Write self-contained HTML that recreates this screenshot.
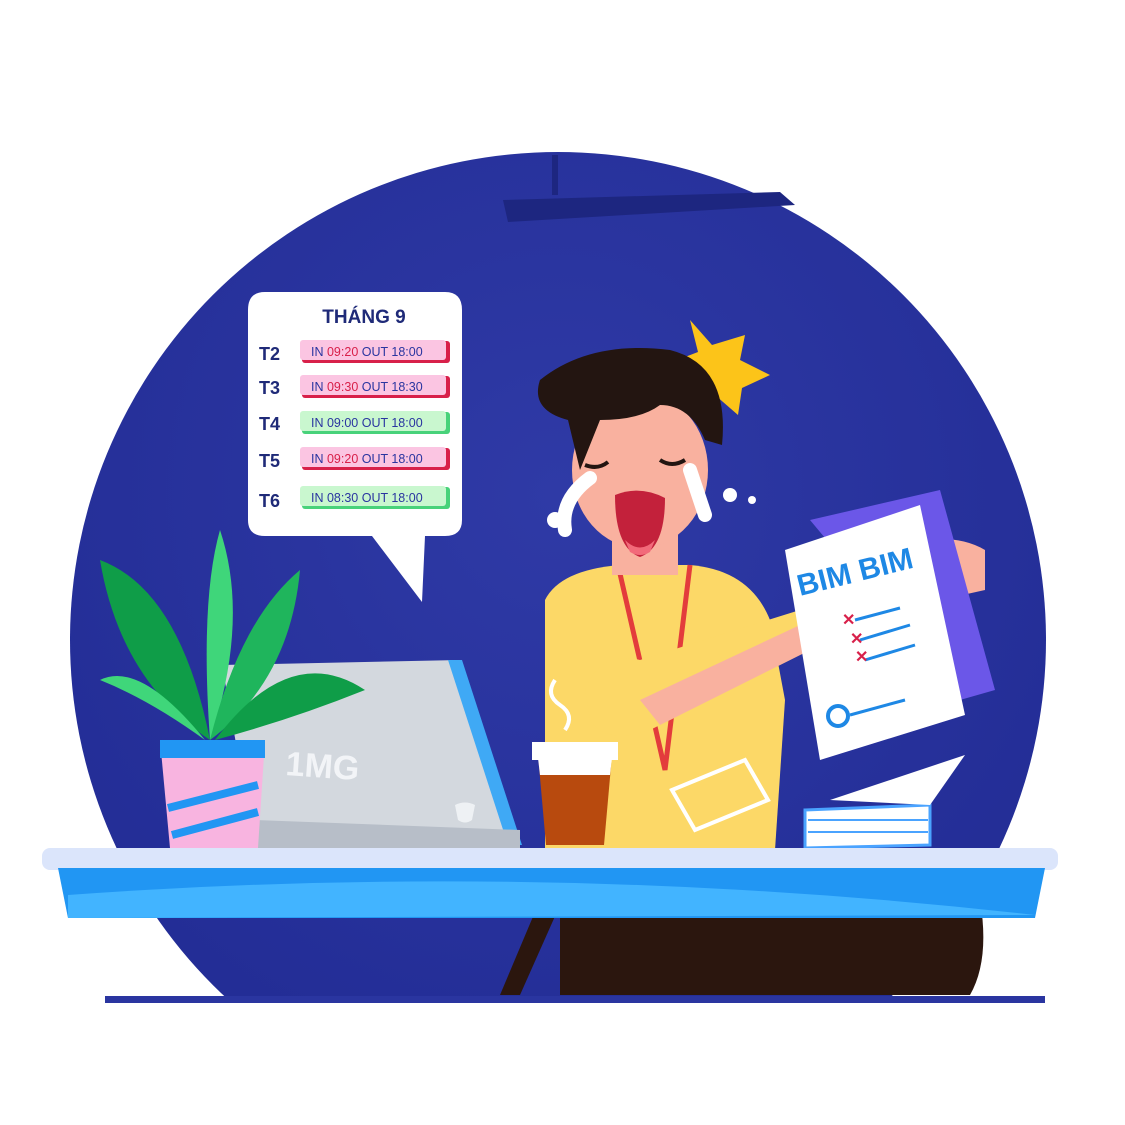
<!DOCTYPE html>
<html><head><meta charset="utf-8"><style>
html,body{margin:0;padding:0;background:#fff;width:1125px;height:1125px;overflow:hidden}
svg{display:block}
text{font-family:"Liberation Sans",sans-serif}
</style></head><body>
<svg width="1125" height="1125" viewBox="0 0 1125 1125" xmlns="http://www.w3.org/2000/svg">
<defs>
<clipPath id="c"><rect x="0" y="0" width="1125" height="1000"/></clipPath>
<radialGradient id="bg" cx="0.5" cy="0.35" r="0.6"><stop offset="0" stop-color="#2f3aa6"/><stop offset="1" stop-color="#232d96"/></radialGradient>
</defs>
<g clip-path="url(#c)"><circle cx="558" cy="640" r="488" fill="url(#bg)"/></g>
<rect x="105" y="996" width="940" height="7" fill="#2a35a0"/>
<!-- ceiling light -->
<path d="M503 200 L780 192 L795 205 L508 222 Z" fill="#1d2680"/>
<path d="M552 155 L558 155 L558 195 L552 195 Z" fill="#1d2680"/>
<!-- speech bubble -->
<path d="M265 292 H445 Q462 292 462 310 V520 Q462 536 445 536 H425 L422 602 L372 536 H265 Q248 536 248 520 V310 Q248 292 265 292 Z" fill="#fff"/>
<text x="364" y="323" text-anchor="middle" font-size="19" font-weight="bold" fill="#1f2a78">THÁNG 9</text>
<g font-size="18" font-weight="bold" fill="#1f2a78">
<text x="259" y="360">T2</text><text x="259" y="394">T3</text><text x="259" y="430">T4</text><text x="259" y="467">T5</text><text x="259" y="507">T6</text></g>
<g font-size="12.5" fill="#2a35a0">
<rect x="302" y="341" width="148" height="22" rx="3" fill="#d8204a"/><rect x="300" y="340" width="146" height="20" rx="3" fill="#fbc5e2"/>
<text x="311" y="356">IN <tspan fill="#d8204a">09:20</tspan> OUT 18:00</text>
<rect x="302" y="376" width="148" height="22" rx="3" fill="#d8204a"/><rect x="300" y="375" width="146" height="20" rx="3" fill="#fbc5e2"/>
<text x="311" y="391">IN <tspan fill="#d8204a">09:30</tspan> OUT 18:30</text>
<rect x="302" y="412" width="148" height="22" rx="3" fill="#48d27a"/><rect x="300" y="411" width="146" height="20" rx="3" fill="#c9f7cf"/>
<text x="311" y="427">IN 09:00 OUT 18:00</text>
<rect x="302" y="448" width="148" height="22" rx="3" fill="#d8204a"/><rect x="300" y="447" width="146" height="20" rx="3" fill="#fbc5e2"/>
<text x="311" y="463">IN <tspan fill="#d8204a">09:20</tspan> OUT 18:00</text>
<rect x="302" y="487" width="148" height="22" rx="3" fill="#48d27a"/><rect x="300" y="486" width="146" height="20" rx="3" fill="#c9f7cf"/>
<text x="311" y="502">IN 08:30 OUT 18:00</text></g>
<!-- star -->
<path d="M690 320 L712 345 L745 335 L740 360 L770 375 L742 388 L738 415 L715 395 L690 408 L695 380 L672 362 L698 352 Z" fill="#fcc419"/>
<!-- person legs -->
<path d="M560 900 L980 900 Q990 960 970 995 L560 995 Z" fill="#2b160e"/>
<path d="M540 900 L500 995 L520 995 L560 905 Z" fill="#2b160e"/>
<!-- body -->
<path d="M545 600 Q560 570 620 565 L690 565 Q750 570 770 620 L785 700 L775 850 L545 850 Z" fill="#fcd867"/>
<path d="M618 565 L665 770 L690 565" fill="none" stroke="#e33c3c" stroke-width="5"/>
<!-- neck/head -->
<rect x="612" y="525" width="66" height="50" fill="#f9b19f"/>
<ellipse cx="640" cy="470" rx="68" ry="78" fill="#f9b19f"/>
<path d="M540 380 Q590 340 670 350 Q730 365 722 445 L705 440 Q690 405 660 405 Q640 420 600 420 L580 470 L568 420 Q530 410 540 380 Z" fill="#231511"/>
<path d="M585 465 Q598 470 608 462 M660 460 Q672 468 685 460" stroke="#231511" stroke-width="4" fill="none"/>
<path d="M615 495 Q640 485 665 498 Q665 548 640 557 Q615 548 615 495 Z" fill="#c3213b"/>
<path d="M625 540 Q640 555 655 540 L650 552 Q640 558 630 552 Z" fill="#f26a7a"/>
<path d="M590 478 Q560 500 565 530 M690 470 Q700 500 705 515" stroke="#fff" stroke-width="14" fill="none" stroke-linecap="round"/>
<circle cx="730" cy="495" r="7" fill="#fff"/><circle cx="752" cy="500" r="4" fill="#fff"/><circle cx="555" cy="520" r="8" fill="#fff"/>
<!-- arm across body -->
<path d="M585 690 Q600 650 640 660 L800 610 L820 645 L650 730 Q605 745 590 720 Z" fill="#fcd867"/>
<path d="M640 700 L800 625 L820 645 L660 725 Z" fill="#f9b19f"/>
<path d="M795 605 Q815 595 832 615 L830 640 L805 648 Z" fill="#f9b19f"/>
<path d="M920 540 Q960 535 985 550 L985 590 L940 600 Z" fill="#f9b19f"/>
<!-- paper -->
<path d="M810 520 L940 490 L995 690 L960 700 Z" fill="#6b57e8"/>
<path d="M785 550 L920 505 L965 715 L820 760 Z" fill="#fff"/>
<text x="800" y="596" font-size="30" font-weight="bold" fill="#1e88e5" transform="rotate(-14 800 596)">BIM BIM</text>
<path d="M855 620 L900 608 M860 640 L910 625 M865 660 L915 645 M850 715 L905 700" stroke="#1e88e5" stroke-width="3"/>
<text x="842" y="625" font-size="16" fill="#d8204a" font-weight="bold">✕</text>
<text x="850" y="644" font-size="16" fill="#d8204a" font-weight="bold">✕</text>
<text x="855" y="662" font-size="16" fill="#d8204a" font-weight="bold">✕</text>
<circle cx="838" cy="716" r="10" fill="none" stroke="#1e88e5" stroke-width="4"/>
<!-- papers stack -->
<path d="M805 810 L930 805 L930 845 L805 848 Z" fill="#fff" stroke="#4aa3ff" stroke-width="3"/>
<path d="M808 820 H928 M808 832 H928" stroke="#4aa3ff" stroke-width="2"/>
<path d="M830 800 L965 755 L930 805 Z" fill="#fff"/>
<!-- id card -->
<path d="M672 790 L745 760 L768 800 L695 830 Z" fill="#fcd867" stroke="#fff" stroke-width="4"/>
<!-- laptop -->
<path d="M222 665 L460 660 L520 845 L255 850 Z" fill="#d3d8de"/>
<path d="M448 660 L462 660 L522 845 L508 845 Z" fill="#3fa9f5"/>
<text x="285" y="775" font-size="34" font-weight="bold" fill="#f2f4f7" transform="rotate(4 285 775)">1MG</text>
<path d="M455 805 Q465 800 475 805 L472 820 Q465 825 458 820 Z" fill="#eef1f4"/>
<path d="M255 820 L520 830 L520 850 L255 850 Z" fill="#b7bec8"/>
<!-- plant -->
<g fill="#1fb55c">
<path d="M210 740 Q120 680 100 560 Q180 590 210 740 Z" fill="#0f9d48"/>
<path d="M210 740 Q200 600 220 530 Q250 620 210 740 Z" fill="#3fd67a"/>
<path d="M210 740 Q240 620 300 570 Q290 680 210 740 Z"/>
<path d="M215 740 Q290 640 365 690 Q290 720 215 740 Z" fill="#0f9d48"/>
<path d="M205 740 Q150 700 100 680 Q140 660 205 740 Z" fill="#3fd67a"/>
</g>
<path d="M160 740 L265 740 L258 848 L170 848 Z" fill="#f8b4e0"/>
<rect x="160" y="740" width="105" height="18" fill="#2196f3"/>
<path d="M168 808 L258 785 M172 835 L258 812" stroke="#2196f3" stroke-width="8"/>
<!-- coffee -->
<path d="M555 680 Q545 695 560 705 Q575 715 565 730" stroke="#fff" stroke-width="4" fill="none"/>
<path d="M538 755 L612 755 L604 845 L546 845 Z" fill="#b84a0e"/>
<path d="M538 758 L612 758 L610 775 L540 775 Z" fill="#fff"/>
<path d="M532 742 L618 742 L618 760 L532 760 Z" fill="#fff"/>
<!-- desk -->
<rect x="42" y="848" width="1016" height="22" rx="8" fill="#dbe5fb"/>
<path d="M58 868 L1045 868 L1035 918 L68 918 Z" fill="#2196f3"/>
<path d="M68 895 Q550 860 1035 915 L68 918 Z" fill="#42b4ff"/>
</svg>
</body></html>
